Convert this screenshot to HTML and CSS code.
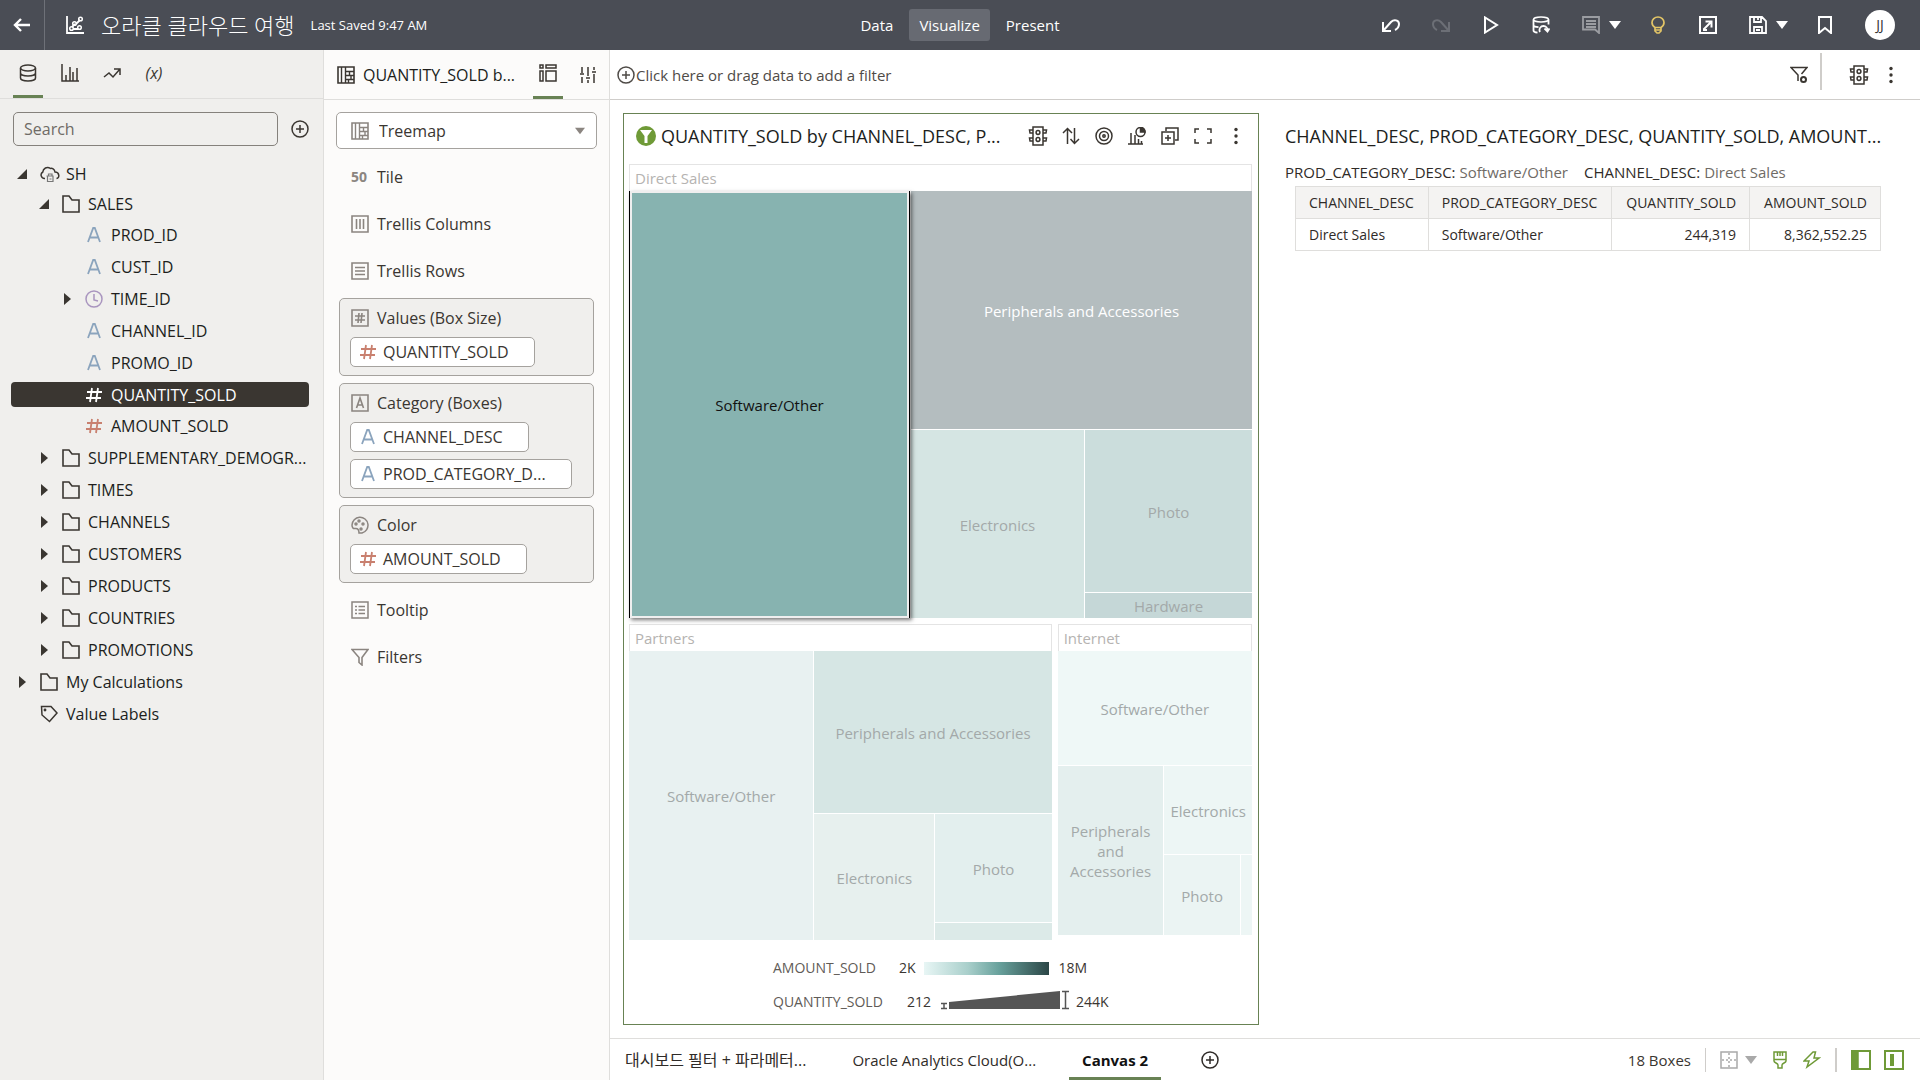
FILE: index.html
```html
<!DOCTYPE html>
<html lang="ko">
<head>
<meta charset="utf-8">
<title>오라클 클라우드 여행</title>
<link rel="stylesheet" href="styles.css">
</head>
<body>
<svg class="sprite" aria-hidden="true">
  <symbol id="back" viewBox="0 0 18 18"><path d="M17 9H2M8 3L2 9l6 6" stroke-width="2.4"/></symbol>
  <symbol id="scatter" viewBox="0 0 18 18"><path d="M1 0v17h17M6 11l3-3M10 8l4-4M7 13h5" stroke-width="1.8"/><circle cx="5.500" cy="12.500" r="1.800"/><circle cx="8.500" cy="7.500" r="1.800"/><circle cx="14.500" cy="3" r="1.800"/><circle cx="13.500" cy="11.500" r="1.800"/></symbol>
  <symbol id="undo" viewBox="0 0 18 18"><path d="M1 6v9h8M1 15l8-9c3-3 8-2 8 2 0 3-2 5-4 6" stroke-width="2"/></symbol>
  <symbol id="play" viewBox="0 0 18 18"><path d="M3 1.500v15L15 9z" stroke-width="2"/></symbol>
  <symbol id="dbrefresh" viewBox="0 0 18 18"><ellipse cx="9" cy="3.500" rx="7.500" ry="2.500"/><path d="M1.500 3.500v11c0 1 2 2 4 2.200M1.500 9c0 1.200 2 2 5 2.200M16.500 3.500v5M8 16c-1.500-3 .5-6 3.500-6 2.500 0 4 2 4 4M12.500 12.500l3 3 2-3" stroke-width="1.800"/></symbol>
  <symbol id="comment" viewBox="0 0 18 18"><path d="M1 1h16v16l-4-3.500H1zM4 5h10M4 8h10M4 11h10" stroke-width="1.800"/></symbol>
  <symbol id="caret" viewBox="0 0 12 8"><path d="M0 0h12L6 8z" fill="currentColor" stroke="none"/></symbol>
  <symbol id="bulb" viewBox="0 0 18 18"><path d="M6 11.500C3.500 10 3 8 3 6.500a6 5.500 0 0 1 12 0c0 1.500-.5 3.500-3 5zM6 12v3l2 2h2l2-2v-3M6 14h6" stroke-width="1.700"/></symbol>
  <symbol id="export" viewBox="0 0 18 18"><path d="M1 1h16v16H1zM4.500 13.500l7.500-7.500M6.500 5.500h6v6M4 14h4" stroke-width="2"/></symbol>
  <symbol id="save" viewBox="0 0 18 18"><path d="M1 1h12l4 4v12H1zM5 1v5h7V1M9 2v2M5 17v-6h8v6M7 14h4" stroke-width="1.800"/></symbol>
  <symbol id="bookmark" viewBox="0 0 18 18"><path d="M3 1h12v16l-6-5-6 5z" stroke-width="2"/></symbol>
  <symbol id="db" viewBox="0 0 18 18"><ellipse cx="9" cy="4" rx="7.500" ry="3"/><path d="M1.500 4v10c0 1.700 3.400 3 7.500 3s7.500-1.300 7.500-3V4M1.500 9c0 1.700 3.400 3 7.500 3s7.500-1.300 7.500-3"/></symbol>
  <symbol id="bars" viewBox="0 0 18 18"><path d="M1 0v17h17M5 17v-6M9 17V3M12 17V8M16 17V4"/></symbol>
  <symbol id="trend" viewBox="0 0 18 18"><path d="M1 13l5-4 4 4 7-8M11 5h6v6"/></symbol>
  <symbol id="plus" viewBox="0 0 18 18"><circle cx="9" cy="9" r="8"/><path d="M9 5v8M5 9h8"/></symbol>
  <symbol id="tri-open" viewBox="0 0 12 12"><path d="M11 1v10H1z" fill="currentColor" stroke="none"/></symbol>
  <symbol id="tri" viewBox="0 0 12 12"><path d="M3 0v12l7-6z" fill="currentColor" stroke="none"/></symbol>
  <symbol id="cloud" viewBox="0 0 20 18"><path d="M5 13.500H4.500A3.500 3.500 0 0 1 2.800 7C3 3.500 7 1 10.500 3.500c1.500-.5 4 .5 4.500 3.500 4.500 0 5 6 1.500 6.500"/><path d="M6.500 11h7M7.500 11v5.500h5.500V11M8.500 11V9h3.500v2M9.500 14h2" stroke-width="1.200" stroke="#777"/></symbol>
  <symbol id="folder" viewBox="0 0 18 18"><path d="M1 1h6l3 4h7v12H1z" stroke-width="1.600"/></symbol>
  <symbol id="attr" viewBox="0 0 18 18"><path d="M3 16L8.200 2h1.600L15 16M5 11.500h8" stroke-width="1.800"/></symbol>
  <symbol id="hash" viewBox="0 0 18 18"><path d="M7 2L5 16M13 2l-2 14M2 6h15M1 12h15" stroke-width="1.800"/></symbol>
  <symbol id="clock" viewBox="0 0 18 18"><circle cx="9" cy="9" r="8"/><path d="M9 4v6l4 1"/></symbol>
  <symbol id="tag" viewBox="0 0 18 18"><path d="M1.500 1.500H11L17 8l-7.500 8.500L2 10z"/><circle cx="5" cy="5" r=".7"/></symbol>
  <symbol id="treemap" viewBox="0 0 18 18"><path d="M1 1h16v16H1z" stroke-width="1.600"/><path d="M4.500 1v16M8.500 1v16M8.500 5.500H17M8.500 9.500H17M8.500 13.500H17M12.500 5.500v4M14 9.500v4M11.500 13.500V17" stroke-width="1.400"/></symbol>
  <symbol id="grammar" viewBox="0 0 18 18"><path d="M1 1h3v3H1zM7 1h10v3H7zM1 7h3v10H1zM7 7h10v10H7z"/></symbol>
  <symbol id="sliders" viewBox="0 0 18 18"><path d="M3 1v6M3 11v6M9 1v9M9 14v3M15 1v3M15 8v9M1 8h4M7 12h4M13 6h4"/></symbol>
  <symbol id="cols" viewBox="0 0 18 18"><path d="M1 1h16v16H1zM5.500 4v10M9 4v10M12.500 4v10" stroke-width="1.600"/></symbol>
  <symbol id="rows" viewBox="0 0 18 18"><path d="M1 1h16v16H1zM4 5.500h10M4 9h10M4 12.500h10" stroke-width="1.600"/></symbol>
  <symbol id="boxhash" viewBox="0 0 18 18"><path d="M1 1h16v16H1zM8 4L7 14M11 4l-1 10M4 7h10M4 11h10" stroke-width="1.600"/></symbol>
  <symbol id="boxattr" viewBox="0 0 18 18"><path d="M1 1h16v16H1zM5.500 14L9 4l3.500 10M6.500 11h5" stroke-width="1.600"/></symbol>
  <symbol id="palette" viewBox="0 0 18 18"><path d="M8 17C8 14 7 12 4 12.500 2 13 1 11 1 9a8 8 0 1 1 10 8z"/><circle cx="5" cy="8" r="1"/><circle cx="8" cy="5" r="1"/><circle cx="12" cy="8" r="1"/><circle cx="10" cy="13" r="1"/></symbol>
  <symbol id="tip" viewBox="0 0 18 18"><path d="M1 1h16v16H1zM4 5.500h2M4 9h2M4 12.500h2M7.500 5.500H14M7.500 9H14M7.500 12.500H14" stroke-width="1.500"/></symbol>
  <symbol id="funnel" viewBox="0 0 18 18"><path d="M1 1.500h16l-6 8V17l-3-2.500v-5z" stroke-width="1.600"/></symbol>
  <symbol id="funnelgear" viewBox="0 0 18 18"><path d="M8 15V9L1 1.500h16L11.500 8"/><circle cx="13.500" cy="13.500" r="2.500" stroke-width="2"/></symbol>
  <symbol id="traffic" viewBox="0 0 20 20"><path d="M5 1h10v18H5zM5 4H1.500L2 7h3M5 12H1.500L2 15h3M15 4h3.500L18 7h-3M15 12h3.500l-.5 3h-3"/><circle cx="10" cy="6.500" r="1.900"/><circle cx="10" cy="13.500" r="1.900"/></symbol>
  <symbol id="dots" viewBox="0 0 18 18"><g fill="currentColor" stroke="none"><circle cx="9" cy="2.500" r="1.700"/><circle cx="9" cy="9" r="1.700"/><circle cx="9" cy="15.500" r="1.700"/></g></symbol>
  <symbol id="sort" viewBox="0 0 18 18"><path d="M5.500 17V2M1 6l4.500-4.500L10 6M12.500 1v15M8.500 12l4 4.500L17 12"/></symbol>
  <symbol id="target" viewBox="0 0 18 18"><circle cx="9" cy="9" r="8"/><circle cx="9" cy="9" r="4.500"/><circle cx="9" cy="9" r="1.200"/></symbol>
  <symbol id="charts" viewBox="0 0 18 18"><path d="M0 17h15M3 17V6M7 17V8M10.500 17v-5M13.500 17v-3"/><circle cx="12.500" cy="5" r="4.500"/><path d="M12.500 5V.5A4.500 4.500 0 0 1 17 5z" fill="currentColor"/></symbol>
  <symbol id="dup" viewBox="0 0 18 18"><path d="M1 5h12v12H1zM5 4V1h12v12h-3M7 8v6M4 11h6"/></symbol>
  <symbol id="full" viewBox="0 0 18 18"><path d="M1 6V2h4M13 2h4v4M17 12v4h-4M5 16H1v-4"/></symbol>
  <symbol id="gridic" viewBox="0 0 18 18"><path d="M1 1h16v16H1z"/><path d="M9 2v15M2 9h15" stroke-dasharray="2 2"/></symbol>
  <symbol id="brush" viewBox="0 0 18 18"><path d="M3 1h12v9c0 2-4 2-4 4v3H7v-3c0-2-4-2-4-4zM3 8.500h12M6.500 1v4M9 1v4M11.500 1v4"/></symbol>
  <symbol id="bolt" viewBox="0 0 18 18"><path d="M10 1L1 10h5l-2 6 12-9h-5l1.500-6z"/></symbol>
</svg>

<header class="topbar">
  <div class="topbar-left">
    <button class="back" aria-label="Back"><svg class="ic"><use href="#back"/></svg></button>
    <svg class="ic logo"><use href="#scatter"/></svg>
    <h1>오라클 클라우드 여행</h1>
    <span class="saved">Last Saved 9:47 AM</span>
  </div>
  <nav class="modes">
    <button>Data</button><button class="on">Visualize</button><button>Present</button>
  </nav>
  <div class="tools">
    <button aria-label="Undo"><svg class="ic"><use href="#undo"/></svg></button>
    <button class="faint" aria-label="Redo"><svg class="ic mirror"><use href="#undo"/></svg></button>
    <button aria-label="Preview"><svg class="ic"><use href="#play"/></svg></button>
    <button aria-label="Refresh data"><svg class="ic"><use href="#dbrefresh"/></svg></button>
    <button class="drop" aria-label="Notes"><svg class="ic muted"><use href="#comment"/></svg><svg class="caret"><use href="#caret"/></svg></button>
    <button class="gold" aria-label="Insights"><svg class="ic"><use href="#bulb"/></svg></button>
    <button aria-label="Export"><svg class="ic"><use href="#export"/></svg></button>
    <button class="drop" aria-label="Save"><svg class="ic"><use href="#save"/></svg><svg class="caret"><use href="#caret"/></svg></button>
    <button aria-label="Bookmark"><svg class="ic"><use href="#bookmark"/></svg></button>
    <button class="avatar">JJ</button>
  </div>
</header>

<div class="workspace">
  <aside class="data-panel">
    <div class="tabs">
      <button class="on" aria-label="Data"><svg class="ic"><use href="#db"/></svg></button>
      <button aria-label="Visualizations"><svg class="ic"><use href="#bars"/></svg></button>
      <button aria-label="Analytics"><svg class="ic"><use href="#trend"/></svg></button>
      <button class="param">(x)</button>
    </div>
    <div class="search">
      <input type="text" placeholder="Search" aria-label="Search">
      <button aria-label="Add data"><svg class="ic"><use href="#plus"/></svg></button>
    </div>
    <ul class="tree">
      <li class="l1 tight"><svg class="tri"><use href="#tri-open"/></svg><svg class="ic cloud"><use href="#cloud"/></svg><span>SH</span></li>
      <li class="l2 tight"><svg class="tri"><use href="#tri-open"/></svg><svg class="ic"><use href="#folder"/></svg><span>SALES</span></li>
      <li class="l3"><i class="tri"></i><svg class="ic blue"><use href="#attr"/></svg><span>PROD_ID</span></li>
      <li class="l3"><i class="tri"></i><svg class="ic blue"><use href="#attr"/></svg><span>CUST_ID</span></li>
      <li class="l3"><svg class="tri"><use href="#tri"/></svg><svg class="ic violet"><use href="#clock"/></svg><span>TIME_ID</span></li>
      <li class="l3"><i class="tri"></i><svg class="ic blue"><use href="#attr"/></svg><span>CHANNEL_ID</span></li>
      <li class="l3"><i class="tri"></i><svg class="ic blue"><use href="#attr"/></svg><span>PROMO_ID</span></li>
      <li class="l3 selected"><i class="tri"></i><svg class="ic white"><use href="#hash"/></svg><span>QUANTITY_SOLD</span></li>
      <li class="l3"><i class="tri"></i><svg class="ic red"><use href="#hash"/></svg><span>AMOUNT_SOLD</span></li>
      <li class="l2"><svg class="tri"><use href="#tri"/></svg><svg class="ic"><use href="#folder"/></svg><span>SUPPLEMENTARY_DEMOGR...</span></li>
      <li class="l2"><svg class="tri"><use href="#tri"/></svg><svg class="ic"><use href="#folder"/></svg><span>TIMES</span></li>
      <li class="l2"><svg class="tri"><use href="#tri"/></svg><svg class="ic"><use href="#folder"/></svg><span>CHANNELS</span></li>
      <li class="l2"><svg class="tri"><use href="#tri"/></svg><svg class="ic"><use href="#folder"/></svg><span>CUSTOMERS</span></li>
      <li class="l2"><svg class="tri"><use href="#tri"/></svg><svg class="ic"><use href="#folder"/></svg><span>PRODUCTS</span></li>
      <li class="l2"><svg class="tri"><use href="#tri"/></svg><svg class="ic"><use href="#folder"/></svg><span>COUNTRIES</span></li>
      <li class="l2"><svg class="tri"><use href="#tri"/></svg><svg class="ic"><use href="#folder"/></svg><span>PROMOTIONS</span></li>
      <li class="l1"><svg class="tri"><use href="#tri"/></svg><svg class="ic"><use href="#folder"/></svg><span>My Calculations</span></li>
      <li class="l1"><i class="tri"></i><svg class="ic"><use href="#tag"/></svg><span>Value Labels</span></li>
    </ul>
  </aside>

  <aside class="grammar-panel">
    <div class="panel-head">
      <svg class="ic"><use href="#treemap"/></svg><span>QUANTITY_SOLD b...</span>
      <button class="on" aria-label="Grammar"><svg class="ic"><use href="#grammar"/></svg></button>
      <button aria-label="Properties"><svg class="ic"><use href="#sliders"/></svg></button>
    </div>
    <div class="viz-type">
      <svg class="ic"><use href="#treemap"/></svg>
      <select aria-label="Visualization type"><option>Treemap</option></select>
      <svg class="caret"><use href="#caret"/></svg>
    </div>
    <div class="slots">
      <div class="slot"><span class="fifty">50</span>Tile</div>
      <div class="slot"><svg class="ic"><use href="#cols"/></svg>Trellis Columns</div>
      <div class="slot"><svg class="ic"><use href="#rows"/></svg>Trellis Rows</div>
      <section class="well">
        <h3><svg class="ic"><use href="#boxhash"/></svg>Values (Box Size)</h3>
        <button class="chip"><svg class="ic red"><use href="#hash"/></svg>QUANTITY_SOLD</button>
      </section>
      <section class="well">
        <h3><svg class="ic"><use href="#boxattr"/></svg>Category (Boxes)</h3>
        <button class="chip"><svg class="ic blue"><use href="#attr"/></svg>CHANNEL_DESC</button>
        <button class="chip"><svg class="ic blue"><use href="#attr"/></svg>PROD_CATEGORY_D...</button>
      </section>
      <section class="well">
        <h3><svg class="ic"><use href="#palette"/></svg>Color</h3>
        <button class="chip"><svg class="ic red"><use href="#hash"/></svg>AMOUNT_SOLD</button>
      </section>
      <div class="slot"><svg class="ic"><use href="#tip"/></svg>Tooltip</div>
      <div class="slot"><svg class="ic"><use href="#funnel"/></svg>Filters</div>
    </div>
  </aside>

  <main class="main">
    <div class="filterbar">
      <button class="add"><svg class="ic"><use href="#plus"/></svg>Click here or drag data to add a filter</button>
      <button aria-label="Filter settings"><svg class="ic"><use href="#funnelgear"/></svg></button>
      <i class="divider"></i>
      <button class="signal" aria-label="Data actions"><svg class="ic big"><use href="#traffic"/></svg></button>
      <button aria-label="Menu"><svg class="ic"><use href="#dots"/></svg></button>
    </div>

    <div class="canvas">
      <section class="card">
        <div class="card-head">
          <svg class="badge" viewBox="0 0 20 20"><circle cx="10" cy="10" r="10" fill="#6f9a37"/><path d="M4 4h12l-4.500 6v7h-3v-7z" fill="#fff"/></svg>
          <h2>QUANTITY_SOLD by CHANNEL_DESC, P...</h2>
          <div class="card-tools">
            <button aria-label="Data actions"><svg class="ic big"><use href="#traffic"/></svg></button>
            <button aria-label="Sort"><svg class="ic"><use href="#sort"/></svg></button>
            <button aria-label="Focus"><svg class="ic"><use href="#target"/></svg></button>
            <button aria-label="Change chart"><svg class="ic"><use href="#charts"/></svg></button>
            <button aria-label="Duplicate"><svg class="ic"><use href="#dup"/></svg></button>
            <button aria-label="Maximize"><svg class="ic"><use href="#full"/></svg></button>
            <button aria-label="Menu"><svg class="ic"><use href="#dots"/></svg></button>
          </div>
        </div>
        <div class="treemap">
          <section class="group direct">
            <h3>Direct Sales</h3>
            <div class="tiles">
              <div class="tile t-software picked">Software/Other</div>
              <div class="tile t-periph">Peripherals and Accessories</div>
              <div class="tile t-elec">Electronics</div>
              <div class="tile t-photo">Photo</div>
              <div class="tile t-hard">Hardware</div>
            </div>
          </section>
          <section class="group partners">
            <h3>Partners</h3>
            <div class="tiles">
              <div class="tile t-software">Software/Other</div>
              <div class="tile t-periph">Peripherals and Accessories</div>
              <div class="tile t-elec">Electronics</div>
              <div class="tile t-photo">Photo</div>
              <div class="tile t-hard"></div>
            </div>
          </section>
          <section class="group internet">
            <h3>Internet</h3>
            <div class="tiles">
              <div class="tile t-software">Software/Other</div>
              <div class="tile t-periph">Peripherals and Accessories</div>
              <div class="tile t-elec">Electronics</div>
              <div class="tile t-photo">Photo</div>
              <div class="tile t-hard"></div>
            </div>
          </section>
        </div>
        <div class="legend">
          <div class="legend-row"><span class="name">AMOUNT_SOLD</span><span>2K</span><i class="ramp"></i><span>18M</span></div>
          <div class="legend-row"><span class="name wide">QUANTITY_SOLD</span><span>212</span>
            <svg class="wedge" viewBox="0 0 130 20"><path d="M8 12L119 1v18H8z" fill="#555" stroke="none"/><path d="M0 13.500h6M3 13v5M0 18.500h6M121 1.500h7M124.500 1v17M121 18.500h7" stroke="#555"/></svg>
            <span>244K</span></div>
        </div>
      </section>

      <section class="detail">
        <h2>CHANNEL_DESC, PROD_CATEGORY_DESC, QUANTITY_SOLD, AMOUNT...</h2>
        <p><span>PROD_CATEGORY_DESC:<em>Software/Other</em></span><span>CHANNEL_DESC:<em>Direct Sales</em></span></p>
        <table>
          <thead><tr><th>CHANNEL_DESC</th><th>PROD_CATEGORY_DESC</th><th class="num">QUANTITY_SOLD</th><th class="num">AMOUNT_SOLD</th></tr></thead>
          <tbody><tr><td>Direct Sales</td><td>Software/Other</td><td class="num">244,319</td><td class="num">8,362,552.25</td></tr></tbody>
        </table>
      </section>
    </div>

    <footer class="footer">
      <nav class="canvases">
        <button class="hangul">대시보드 필터 + 파라메터...</button>
        <button>Oracle Analytics Cloud(O...</button>
        <button class="on">Canvas 2</button>
        <button class="add" aria-label="Add canvas"><svg class="ic"><use href="#plus"/></svg></button>
      </nav>
      <div class="status">
        <span>18 Boxes</span><i class="divider"></i>
        <button class="grey" aria-label="Grid"><svg class="ic"><use href="#gridic"/></svg><svg class="caret"><use href="#caret"/></svg></button>
        <button aria-label="Brushing"><svg class="ic"><use href="#brush"/></svg></button>
        <button aria-label="Auto apply"><svg class="ic"><use href="#bolt"/></svg></button>
        <i class="divider thick"></i>
        <button aria-label="Data panel"><svg class="pane" viewBox="0 0 20 20"><path d="M1 1h18v18H1z" stroke-width="2"/><path d="M1 1h6v18H1z" fill="currentColor"/></svg></button>
        <button aria-label="Grammar panel"><svg class="pane" viewBox="0 0 20 20"><path d="M1 1h18v18H1z" stroke-width="2"/><path d="M8 4v12" stroke-width="4"/></svg></button>
      </div>
    </footer>
  </main>
</div>
</body>
</html>
```
FILE: styles.css
```css
* { box-sizing: border-box; }
body {
  margin: 0;
  min-height: 100vh;
  display: flex;
  flex-direction: column;
  font: 16px/24px "Open Sans", "Noto Sans CJK KR", sans-serif;
  color: #201e1c;
  background: #fff;
}
h1, h2, h3, p, ul { margin: 0; padding: 0; font-weight: 400; }
button {
  display: flex;
  align-items: center;
  justify-content: center;
  border: 0;
  padding: 0;
  background: none;
  font: inherit;
  color: inherit;
  white-space: nowrap;
}
svg { flex: none; fill: none; stroke: currentColor; stroke-width: 1.5; display: block; }
.sprite { width: 0; height: 0; position: absolute; }
.ic { width: 18px; height: 18px; }
.big { width: 20px; height: 20px; }
.caret { width: 12px; height: 8px; }

/* top bar */
.topbar {
  height: 50px;
  display: grid;
  grid-template-columns: 1fr auto 1fr;
  align-items: center;
  color: #fff;
  background: #4a4d55;
}
.topbar-left { display: flex; align-items: center; height: 100%; }
.back { width: 45px; height: 100%; border-right: 1px solid #6e7178; }
.logo { margin: 0 17px 0 21px; }
h1 { font-size: 22px; font-weight: 300; line-height: 30px; }
.saved { margin-left: 16px; font-size: 13px; }
.modes { display: flex; gap: 6px; font-size: 15px; }
.modes button { height: 32px; padding: 0 10px; border-radius: 3px; }
.modes .on { background: #676a72; }
.tools { display: flex; justify-content: flex-end; align-items: center; gap: 32px; padding-right: 25px; }
.tools .drop { gap: 9px; margin-right: -4px; }
.tools .avatar { width: 30px; height: 30px; border-radius: 50%; background: #fff; color: #333; font-size: 14px; margin-left: -1px; }
.faint { color: #6c6f76; }
.muted { color: #9b9da2; }
.gold { color: #e3c567; }
.mirror { transform: scaleX(-1); }

/* left panels */
.workspace { flex: 1; display: flex; }
.data-panel { flex: none; width: 324px; background: #f0efed; border-right: 1px solid #dfdedc; }
.tabs { display: flex; gap: 12px; height: 49px; padding: 0 13px; border-bottom: 1px solid #dfdedc; color: #3a3631; }
.tabs button { width: 30px; padding-bottom: 2px; }
.tabs .on, .panel-head .on { border-bottom: 3px solid #688254; padding: 2px 0; }
.param { font-style: italic; }
.search { display: flex; align-items: center; gap: 13px; padding: 13px 14px 13px 13px; color: #3a3631; }
.search input {
  flex: 1; min-width: 0; height: 34px; padding: 0 10px;
  border: 1px solid #85817c; border-radius: 5px; background: none;
  font: inherit; color: inherit;
}
.search input::placeholder { color: #6f6b66; opacity: 1; }
.tree { list-style: none; padding: 0 14px 0 11px; color: #201e1c; }
.tree li { height: 32px; display: flex; align-items: center; white-space: nowrap; }
.tree .tight { height: 30px; }
.tree svg { margin-right: 8px; color: #3a3631; }
.tree .tri { flex: none; width: 12px; height: 12px; margin-right: 12px; }
.tree .l1 { padding-left: 5px; }
.tree .l2 { padding-left: 27px; }
.tree .l3 { padding-left: 50px; }
.tree .cloud { width: 20px; margin-right: 6px; }
.tree .selected { height: 25px; margin: 3px 0; border-radius: 4px; background: #3a3631; color: #fff; }

.grammar-panel { flex: none; width: 286px; background: #fcfbfa; border-right: 1px solid #dfdedc; color: #3a3631; }
.panel-head { display: flex; align-items: stretch; height: 50px; padding: 0 6px 0 13px; border-bottom: 1px solid #dfdedc; }
.panel-head > svg, .panel-head > span { align-self: center; }
.panel-head > span { flex: 1; margin-left: 8px; color: #201e1c; white-space: nowrap; }
.panel-head button { width: 30px; margin-left: 10px; }
.viz-type { display: grid; align-items: center; margin: 12px 12px 4px; }
.viz-type > * { grid-area: 1 / 1; }
.viz-type select {
  appearance: none; height: 37px; padding: 0 42px;
  border: 1px solid #a5a29e; border-radius: 5px; background: #fff;
  font: inherit; color: inherit;
}
.viz-type svg { z-index: 1; color: #8b8580; }
.viz-type .ic { margin-left: 15px; }
.viz-type .caret { width: 10px; justify-self: end; margin-right: 12px; }
.slots { display: flex; flex-direction: column; padding: 0 15px; }
.slot { display: flex; align-items: center; gap: 8px; height: 47px; padding-left: 12px; }
.slots .ic { color: #8b8580; }
.fifty { width: 18px; font-size: 14px; font-weight: 700; color: #8b8580; }
.well {
  display: flex; flex-direction: column; align-items: flex-start; gap: 7px;
  margin: 4px 0 3px; padding: 6px 10px 8px; border: 1px solid #a5a29e; border-radius: 5px; background: #f0efed;
}
.well h3 { display: flex; align-items: center; gap: 8px; height: 25px; padding-left: 1px; font-size: 16px; line-height: 24px; }
.chip { height: 30px; gap: 6px; padding: 0 25px 0 8px; border: 1px solid #a5a29e; border-radius: 5px; background: #fff; }

/* data type colours */
.ic.ic.blue { color: #8ba4bd; }
.ic.ic.red { color: #c9806f; }
.ic.ic.violet { color: #a995bf; }
.ic.ic.white { color: #fff; }

/* canvas */
.main { flex: 1; min-width: 0; display: flex; flex-direction: column; }
.filterbar { display: flex; align-items: center; height: 50px; padding-right: 20px; border-bottom: 1px solid #cfcdca; color: #3a3631; }
.filterbar .add { flex: 1; justify-content: flex-start; margin-left: 7px; font-size: 15px; gap: 1px; color: #4f4b47; }
.divider { width: 1px; height: 37px; background: #cfcdca; }
.filterbar .divider { width: 2px; margin: 0 27px 6px 12px; }
.filterbar .signal { margin-right: 13px; }
.canvas { flex: 1; display: flex; gap: 26px; padding: 13px 33px 13px 13px; }
.card { flex: 623; min-width: 0; display: flex; flex-direction: column; padding: 0 6px 0 5px; border: 1px solid #688254; }
.card-head { display: flex; align-items: center; height: 50px; padding: 0 7px 6px; }
.badge { width: 20px; height: 20px; stroke: none; }
h2 { font-size: 18px; line-height: 28px; white-space: nowrap; }
.card-head h2 { flex: 1; margin-left: 5px; }
.card-tools { display: flex; align-items: center; gap: 15px; color: #3a3631; }
.card-tools button { width: 18px; }
.treemap { flex: 1; display: grid; grid-template: 454fr 316fr / 422fr 194fr; gap: 6px; font-size: 15px; line-height: 20px; }
.group { display: flex; flex-direction: column; min-width: 0; }
.group h3 { height: 27px; padding: 0 5px; font-size: 15px; line-height: 26px; color: #b5b3b1; border: 1px solid #e4e4e4; border-bottom: 0; }
.tiles { flex: 1; display: grid; gap: 1px; }
.tile { display: flex; align-items: center; justify-content: center; text-align: center; min-width: 0; min-height: 0; padding-top: 1px; color: #a3a9a9; }
.t-software { grid-area: s; } .t-periph { grid-area: p; } .t-elec { grid-area: e; } .t-photo { grid-area: f; } .t-hard { grid-area: h; }
.direct { grid-column: 1 / 3; }
.direct .tiles { grid-template: "s p p" 238fr "s e f" 162fr "s e h" 25fr / 281fr 173fr 167fr; }
.direct .t-periph { background: #b4bdbf; color: #fff; }
.direct .t-elec { background: #d5e5e3; }
.direct .t-photo { background: #cbdddc; }
.direct .t-hard { background: #c5d7d7; }
.picked.tile {
  position: relative;
  background: #87b3b0; color: #111;
  border: solid #000; border-width: 0 1px;
  box-shadow: inset 0 0 0 2px #efefef, 2px 2px 4px #0008;
}
.partners .tiles { grid-template: "s p p" 163fr "s e f" 108fr "s e h" 17fr / 184fr 120fr 116fr; }
.partners .t-software { background: #e8f1f1; }
.partners .t-periph { background: #d6e6e4; }
.partners .t-elec { background: #e7f0ee; }
.partners .t-photo { background: #e3efee; }
.partners .t-hard { background: #dceae8; }
.internet { padding-bottom: 5px; }
.internet .tiles { grid-template: "s s s" 114fr "p e e" 88fr "p f h" 80fr / 105fr 75fr 11fr; }
.internet .t-software { background: #eff8f7; }
.internet .t-periph { background: #e4efee; padding: 0 12px; }
.internet .t-elec, .internet .t-hard { background: #edf6f5; }
.internet .t-photo { background: #ebf4f3; }
.legend { display: flex; flex-direction: column; gap: 10px; height: 84px; padding: 16px 0 0 144px; font-size: 14px; color: #3a3631; }
.legend-row { display: flex; align-items: center; height: 24px; }
.legend .name { width: 126px; color: #5f5b57; }
.legend .wide { width: 134px; }
.ramp { width: 125px; height: 13px; margin: 0 10px 0 8px; background: linear-gradient(90deg, #e8f6f5, #a9cfcb 35%, #68a19c 60%, #2b4646); }
.wedge { width: 130px; height: 20px; margin: 0 5px 4px 10px; }

.detail { flex: 602; min-width: 0; padding-top: 9px; }
.detail p { display: flex; gap: 16px; margin-top: 10px; font-size: 15px; white-space: nowrap; color: #2f2b28; }
.detail em { font-style: normal; margin-left: 4px; color: #6f6b66; }
table { margin: 2px 0 0 10px; border-collapse: collapse; font-size: 14px; line-height: 20px; border: 1px solid #dfdedc; }
th, td { height: 32px; padding: 0 14px 0 13px; border: 1px solid #dfdedc; font-weight: 400; text-align: left; color: #2f2b28; }
th { background: #f4f3f2; }
th.num, td.num { text-align: right; padding: 0 13px 0 14px; }

.footer { display: flex; justify-content: space-between; height: 42px; border-top: 1px solid #dfdedc; font-size: 15px; color: #2f2b28; }
.canvases { display: flex; gap: 20px; margin-left: 2px; }
.canvases button { padding: 3px 13px 0; border-bottom: 3px solid transparent; }
.canvases .hangul { font-size: 16px; }
.canvases .on { font-weight: 700; color: #111; border-color: #688254; }
.canvases .add { padding: 3px 20px 0; }
.status { display: flex; align-items: center; gap: 14px; padding-right: 16px; color: #6f9a37; }
.status span { color: #3a3631; }
.status .divider { height: 24px; }
.status .thick { width: 2px; }
.status button:last-child { margin-left: -1px; }
.grey { color: #a9a9a9; gap: 7px; }
.pane { width: 20px; height: 20px; }
```
